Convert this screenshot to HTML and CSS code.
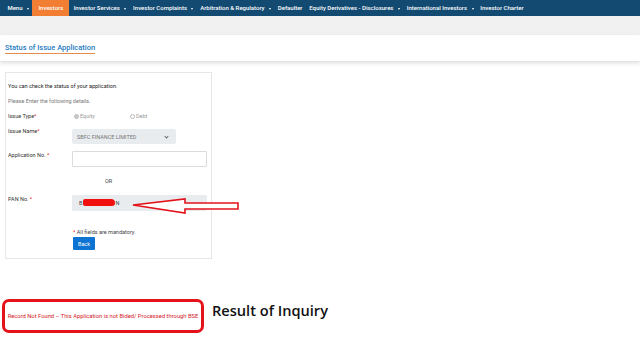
FILE: index.html
```html
<!DOCTYPE html>
<html lang="en">
<head>
  <meta charset="UTF-8">
  <meta name="viewport" content="width=device-width, initial-scale=1.0">
  <title>Status of Issue Application</title>
  <link rel="stylesheet" href="styles.css">
</head>
<body>
  <nav class="topnav">
    <span class="nav-item">Menu <i class="caret"></i></span>
    <span class="nav-item active">Investors</span>
    <span class="nav-item">Investor Services <i class="caret"></i></span>
    <span class="nav-item">Investor Complaints <i class="caret"></i></span>
    <span class="nav-item">Arbitration &amp; Regulatory <i class="caret"></i></span>
    <span class="nav-item">Defaulter</span>
    <span class="nav-item">Equity Derivatives - Disclosures <i class="caret"></i></span>
    <span class="nav-item">International Investors <i class="caret"></i></span>
    <span class="nav-item">Investor Charter</span>
  </nav>

  <div class="band"></div>

  <div class="title-strip">
    <h2 class="page-title">Status of Issue Application</h2>
  </div>

  <div class="form-card">
    <p class="intro">You can check the status of your application.</p>
    <p class="hint">Please Enter the following details.</p>

    <div class="row row-type">
      <label>Issue Type<span class="req">*</span></label>
      <div class="radios">
        <span class="radio checked"><i></i>Equity</span>
        <span class="radio"><i></i>Debt</span>
      </div>
    </div>

    <div class="row row-name">
      <label>Issue Name<span class="req">*</span></label>
      <div class="select">SBFC FINANCE LIMITED <i class="chev"></i></div>
    </div>

    <div class="row row-app">
      <label>Application No. <span class="req">*</span></label>
      <div class="input"></div>
    </div>

    <div class="or">OR</div>

    <div class="row row-pan">
      <label>PAN No. <span class="req">*</span></label>
      <div class="input filled">B<span class="scribble"></span>N</div>
    </div>

    <div class="mandatory"><span>*</span> All fields are mandatory.</div>
    <div class="actions"><button class="btn">Back</button></div>

    <svg class="arrow" width="112" height="20" viewBox="0 0 112 20">
      <polygon points="1,7 53,1 53,5 106,5 106,11 53,11 53,15" fill="#fff" stroke="#e3121b" stroke-width="1.6" stroke-linejoin="miter"/>
    </svg>
  </div>

  <div class="result-row">
    <div class="result-box">Record Not Found – This Application is not Bided/ Processed through BSE</div>
    <div class="result-label">Result of Inquiry</div>
  </div>
</body>
</html>
```

FILE: styles.css
```css
body {
  margin: 0;
  font-family: Roboto, "Liberation Sans", sans-serif;
  background-color: #fff;
  color: #222;
}
.topnav {
  display: flex;
  height: 16px;
  background-color: #124a72;
  padding-left: 4px;
  align-items: stretch;
}
.nav-item {
  display: flex;
  align-items: center;
  padding: 0 3.4px;
  font-size: 6px;
  line-height: 16px;
  font-weight: 500;
  color: #fff;
  white-space: pre;
}
.nav-item.active {
  background-color: #f27e33;
  padding: 0 6px;
  margin-right: 1px;
}
.caret {
  display: block;
  align-self: center;
  width: 0;
  height: 0;
  margin: 1px 0 0 3px;
  border-left: 1.6px solid transparent;
  border-right: 1.6px solid transparent;
  border-top: 2px solid #fff;
}
.band {
  height: 19px;
  background-color: #f1f1f1;
}
.title-strip {
  background: #fff;
  height: 26px;
  padding-left: 5px;
  box-shadow: 0 2px 4px rgba(0, 0, 0, 0.14);
}
.page-title {
  display: inline-block;
  margin: 0;
  padding-top: 7px;
  font-size: 7.5px;
  font-weight: 500;
  line-height: 9px;
  color: #1f7cc0;
  border-bottom: 1px solid #e38c4d;
  padding-bottom: 1px;
}
.form-card {
  position: relative;
  width: 199px;
  margin: 11px 0 0 5px;
  padding: 9px 4px 8px 2px;
  border: 1px solid #e6e6e6;
  font-size: 5.5px;
  line-height: 8px;
}
.form-card p {
  margin: 0;
}
.intro {
  color: #222;
}
.hint {
  margin-top: 7px !important;
  color: #777;
}
.row {
  display: grid;
  grid-template-columns: 64px 1fr;
  align-items: start;
}
.row label {
  color: #333;
}
.req {
  color: #e3121b;
}
.row-type {
  margin-top: 7px;
}
.row-name {
  margin-top: 7px;
}
.row-app {
  margin-top: 7px;
}
.row-pan {
  margin-top: 10px;
}
.radios {
  display: flex;
  color: #999;
}
.radio {
  display: flex;
  align-items: center;
  width: 54px;
  padding-left: 2px;
}
.radio i {
  display: inline-block;
  width: 3px;
  height: 3px;
  border: 0.5px solid #bbb;
  border-radius: 50%;
  margin-right: 1px;
}
.radio.checked i {
  background: #ccc;
}
.select {
  display: flex;
  align-items: center;
  justify-content: space-between;
  width: 91px;
  height: 15px;
  margin-top: 2px;
  padding: 0 8px 0 5px;
  background: #e9ecef;
  border-radius: 2px;
  color: #777;
}
.chev {
  width: 2px;
  height: 2px;
  border-right: 0.7px solid #666;
  border-bottom: 0.7px solid #666;
  transform: rotate(45deg);
  margin-top: -1px;
}
.input {
  height: 14px;
  border: 1px solid #dcdcdc;
  border-radius: 1px;
  background: #fff;
}
.input.filled {
  display: flex;
  align-items: center;
  background: #e9ecef;
  border-color: #e9ecef;
  padding-left: 6px;
  color: #444;
}
.scribble {
  display: inline-block;
  width: 32px;
  height: 7px;
  margin: -2px 0 0 1px;
  background: #f01010;
  border-radius: 2px 4px 3px 2px;
}
.or {
  margin-top: 10px;
  padding-left: 97px;
  color: #444;
}
.mandatory {
  margin-top: 17px;
  padding-left: 65px;
  color: #444;
}
.mandatory span {
  color: #e3121b;
}
.actions {
  padding-left: 65px;
  margin-top: 1px;
}
.btn {
  width: 22px;
  height: 13px;
  padding: 0;
  border: none;
  border-radius: 1px;
  background: #0d74d3;
  color: #fff;
  font-family: Roboto, sans-serif;
  font-size: 5.5px;
}
.arrow {
  position: absolute;
  left: 126px;
  top: 125px;
}
.result-row {
  display: flex;
  align-items: center;
  margin-top: 40px;
  padding-left: 2px;
}
.result-box {
  width: 196px;
  height: 28px;
  display: flex;
  align-items: center;
  justify-content: center;
  border: 3px solid #e3121b;
  border-radius: 7px;
  font-size: 5.8px;
  color: #d4181f;
}
.result-label {
  margin-left: 8px;
  margin-top: -12px;
  font-family: "Open Sans", sans-serif;
  font-weight: 600;
  font-size: 14.6px;
  color: #111;
}
```
